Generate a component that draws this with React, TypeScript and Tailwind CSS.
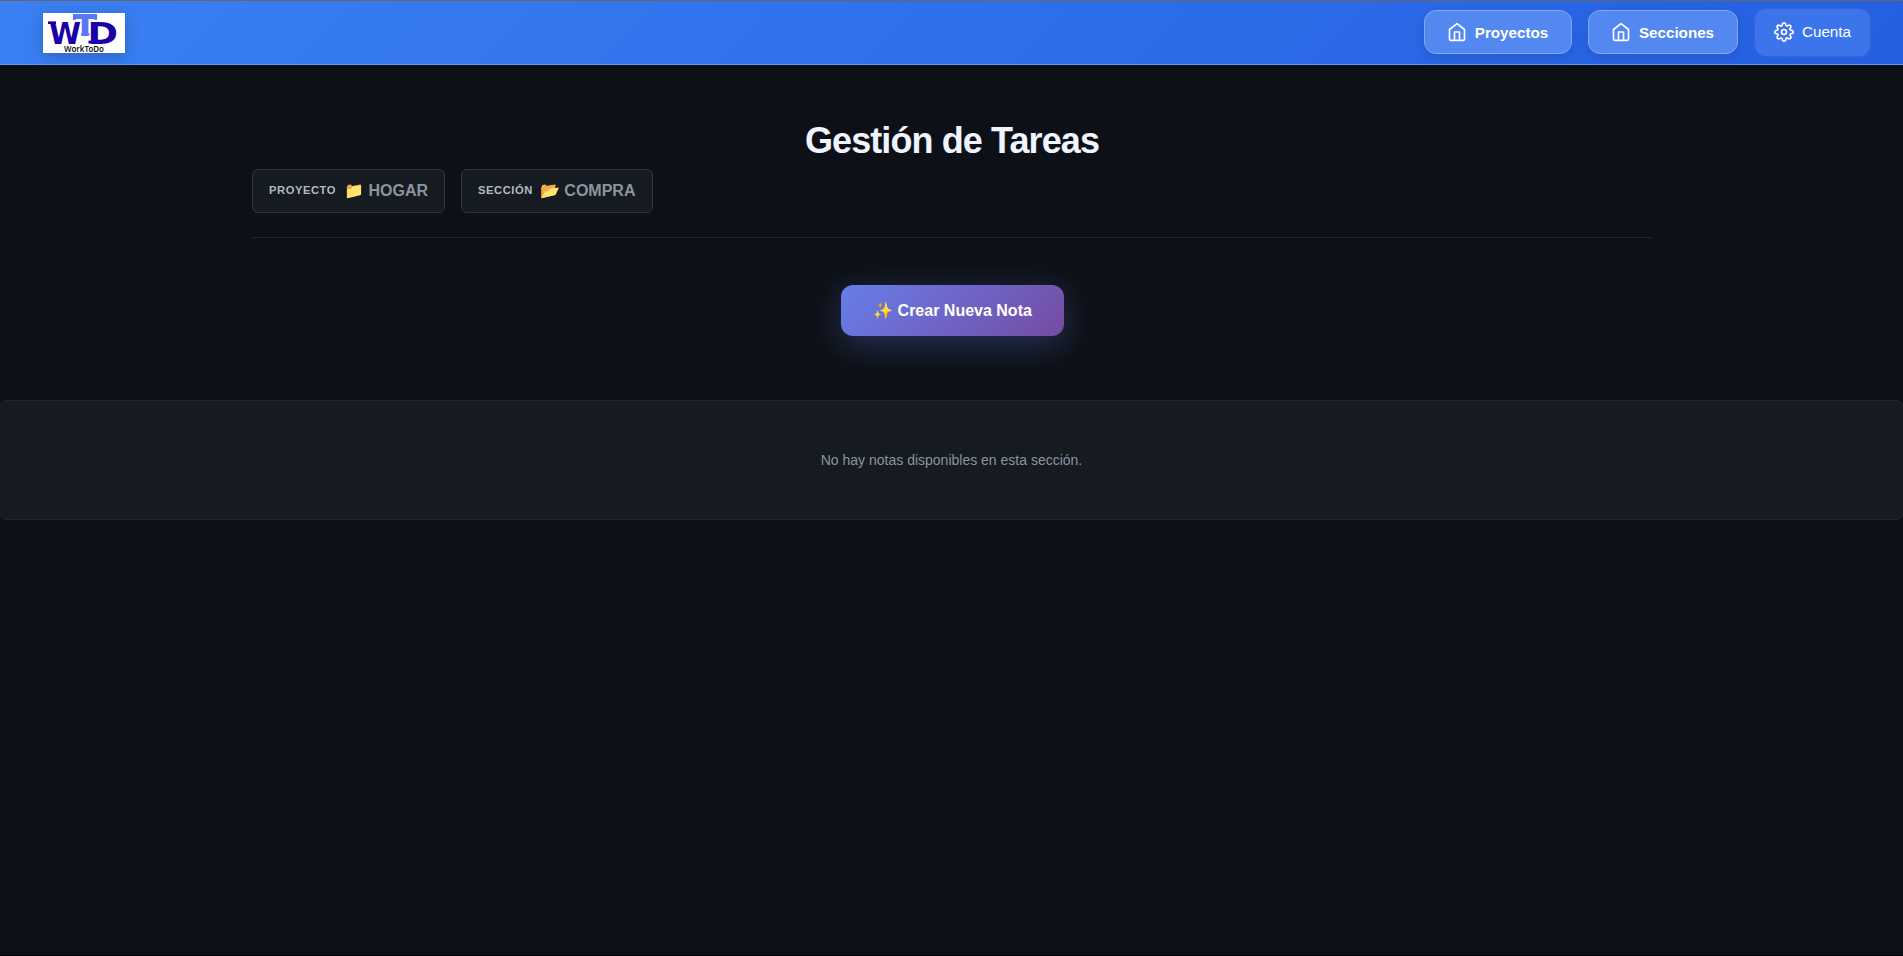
import type { ReactNode } from "react";

function HomeIcon() {
  return (
    <svg className="size-5 shrink-0" viewBox="0 0 24 24" fill="none" stroke="currentColor" strokeWidth="2" strokeLinecap="round" strokeLinejoin="round">
      <path d="M3 9l9-7 9 7v11a2 2 0 0 1-2 2H5a2 2 0 0 1-2-2z" />
      <polyline points="9 22 9 12 15 12 15 22" />
    </svg>
  );
}

function GearIcon() {
  return (
    <svg className="mb-px size-5 shrink-0" viewBox="0 0 24 24" fill="none" stroke="currentColor" strokeWidth="2" strokeLinecap="round" strokeLinejoin="round">
      <circle cx="12" cy="12" r="3" />
      <path d="M19.4 15a1.65 1.65 0 0 0 .33 1.82l.06.06a2 2 0 0 1 0 2.83 2 2 0 0 1-2.83 0l-.06-.06a1.65 1.65 0 0 0-1.82-.33 1.65 1.65 0 0 0-1 1.51V21a2 2 0 0 1-2 2 2 2 0 0 1-2-2v-.09A1.65 1.65 0 0 0 9 19.4a1.65 1.65 0 0 0-1.82.33l-.06.06a2 2 0 0 1-2.83 0 2 2 0 0 1 0-2.83l.06-.06a1.65 1.65 0 0 0 .33-1.82 1.65 1.65 0 0 0-1.51-1H3a2 2 0 0 1-2-2 2 2 0 0 1 2-2h.09A1.65 1.65 0 0 0 4.6 9a1.65 1.65 0 0 0-.33-1.82l-.06-.06a2 2 0 0 1 0-2.83 2 2 0 0 1 2.83 0l.06.06a1.65 1.65 0 0 0 1.82.33H9a1.65 1.65 0 0 0 1-1.51V3a2 2 0 0 1 2-2 2 2 0 0 1 2 2v.09a1.65 1.65 0 0 0 1 1.51 1.65 1.65 0 0 0 1.82-.33l.06-.06a2 2 0 0 1 2.83 0 2 2 0 0 1 0 2.83l-.06.06a1.65 1.65 0 0 0-.33 1.82V9a1.65 1.65 0 0 0 1.51 1H21a2 2 0 0 1 2 2 2 2 0 0 1-2 2h-.09a1.65 1.65 0 0 0-1.51 1z" />
    </svg>
  );
}

function Logo() {
  return (
    <svg className="h-10 w-[82px] bg-white shadow-[0_4px_16px_rgba(0,0,0,0.2)]" viewBox="0 0 82 40">
      <text x="6" y="30.5" fontFamily="DejaVu Sans" fontWeight="700" fontSize="30" textLength="32" lengthAdjust="spacingAndGlyphs" fill="#1a00a8">W</text>
      <text x="44.5" y="30.5" fontFamily="DejaVu Sans" fontWeight="700" fontSize="30" textLength="30.5" lengthAdjust="spacingAndGlyphs" fill="#1a00a8">D</text>
      <rect x="5" y="8.4" width="8" height="2.6" fill="#1a00a8" />
      <rect x="45.5" y="27.6" width="6" height="2.9" fill="#1a00a8" />
      <text x="30" y="22.5" fontFamily="DejaVu Sans" fontWeight="700" fontSize="29" textLength="24" lengthAdjust="spacingAndGlyphs" fill="#5878fa">T</text>
      <rect x="30" y="1" width="24" height="4.5" fill="#5878fa" />
      <rect x="30" y="1" width="2.6" height="6" fill="#5878fa" />
      <rect x="51.4" y="1" width="2.6" height="6" fill="#5878fa" />
      <rect x="38" y="20.3" width="8.5" height="2.2" fill="#5878fa" />
      <text x="21" y="38.6" fontFamily="Noto Sans" fontWeight="600" fontSize="8" textLength="40" lengthAdjust="spacingAndGlyphs" fill="#111">WorkToDo</text>
    </svg>
  );
}

function NavButton({ children, width }: { children: ReactNode; width: string }) {
  return (
    <button className={`${width} mb-px flex h-11 items-center justify-center gap-2 rounded-xl border border-[#83a9f5] bg-[#5388f1] pr-px text-[15.2px] leading-5 font-semibold shadow-[0_4px_12px_rgba(0,0,0,0.1)]`}>
      <HomeIcon />
      <span className="mt-0.5">{children}</span>
    </button>
  );
}

function Chip({ label, icon, name, width, gap }: { label: string; icon: string; name: string; width: string; gap: string }) {
  return (
    <div className={`${width} ${gap} flex h-11 items-center rounded-md border border-[#30363d] bg-[#161b22] pl-[16.5px] whitespace-nowrap`}>
      <span className="mb-0.5 text-[11.2px] font-semibold tracking-[0.56px] text-[#b1bac4]">{label}</span>
      <span className="text-base font-semibold text-[#8b949e]">{icon} {name}</span>
    </div>
  );
}

export default function App() {
  return (
    <div className="flex h-[956px] flex-col overflow-hidden border-b border-black bg-[#0d1117] font-['Liberation_Sans',Arial,sans-serif] text-white">
      <header className="flex h-[65px] shrink-0 items-center justify-between border-t border-b border-t-[#666] border-b-[#6c99f3] bg-linear-[135deg,#3a80f3,#245fe2] pr-8 pl-[43px]">
        <Logo />
        <nav className="flex items-center gap-4">
          <NavButton width="w-[148px]">Proyectos</NavButton>
          <NavButton width="w-[150px]">Secciones</NavButton>
          <button className="flex h-[49px] w-[117px] items-center justify-center gap-2 rounded-xl border border-[#3567cc] bg-[#3c74ec] text-[15.2px]">
            <GearIcon />
            <span>Cuenta</span>
          </button>
        </nav>
      </header>
      <main className="flex flex-col">
        <section className="mx-auto flex h-[173px] w-[1400px] flex-col border-b border-[#21262d] pt-[54px]">
          <h1 className="pl-px text-center text-4xl leading-[43px] font-bold tracking-[-0.9px] text-[#f0f4ff]">Gestión de Tareas</h1>
          <div className="mt-[7px] flex gap-4">
            <Chip label="PROYECTO" icon="📁" name="HOGAR" width="w-[193px]" gap="gap-2" />
            <Chip label="SECCIÓN" icon="📂" name="COMPRA" width="w-[192px]" gap="gap-[7px]" />
          </div>
        </section>
        <div className="flex justify-center pt-[47px] pl-0.5">
          <button className="h-[51px] w-[223px] rounded-xl bg-linear-[135deg,#667eea,#764ba2] text-base font-semibold shadow-[0_8px_32px_rgba(102,126,234,0.3)]">✨ Crear Nueva Nota</button>
        </div>
        <div className="-mx-px mt-16 flex h-[120px] items-center justify-center rounded-lg border border-[#21262d] bg-[#161b22] text-sm text-[#8b949e]">
          No hay notas disponibles en esta sección.
        </div>
      </main>
    </div>
  );
}
